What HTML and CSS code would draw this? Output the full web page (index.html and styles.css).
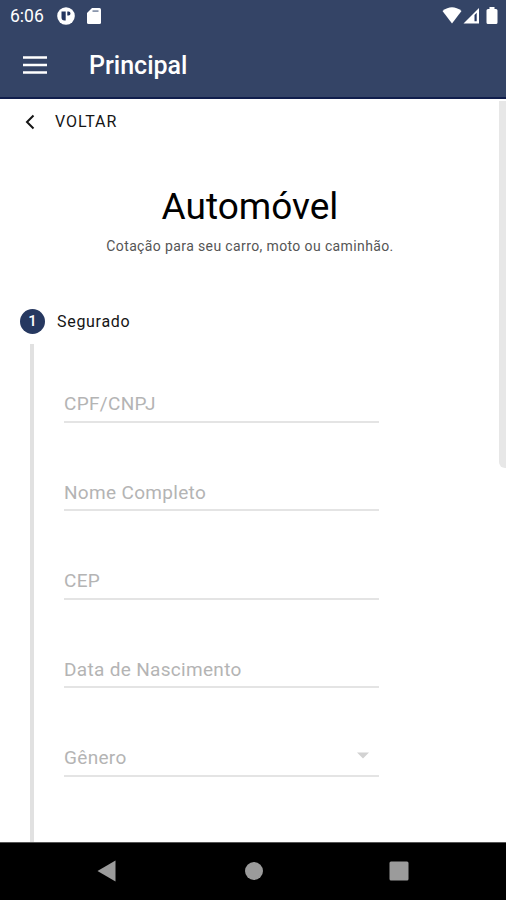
FILE: index.html
```html
<!DOCTYPE html>
<html lang="pt-BR">
<head>
<meta charset="utf-8">
<title>Automóvel</title>
<link rel="stylesheet" href="styles.css">
</head>
<body>
<div class="screen">
  <header class="header">
    <div class="status">
      <span class="time">6:06</span>
      <svg class="app-icon" width="18" height="18" viewBox="0 0 18 18"><circle cx="9" cy="9" r="8.800" fill="#fff"/><path d="M4.500 4.500h4.200v9H7.500a3 3 0 0 1-3-3zM10.300 4.500h1.200a2 2 0 0 1 0 4h-1.200z" fill="#243660"/></svg>
      <svg class="sd-icon" width="14" height="16" viewBox="0 0 14 16"><path d="M5 0h7.500Q14 0 14 1.500v13q0 1.500-1.500 1.500h-11Q0 16 0 14.500V5z" fill="#fff"/><path d="M5.500 2.200h6v1.800h-6z" fill="#8b97ad"/></svg>
      <span class="spacer"></span>
      <svg class="wifi" width="20" height="17" viewBox="0 0 20 17"><path d="M0.500 4Q10-3.500 19.500 4L10 16.500z" fill="#fff"/></svg>
      <svg class="signal" width="17" height="17" viewBox="0 0 17 17"><path d="M0.500 16.500 16 1v15.500z" fill="#fff"/><path d="M11.500 8l2.200-2.200v8.500h-2.200z" fill="#243660"/></svg>
      <svg class="battery" width="12" height="17" viewBox="0 0 12 17"><path d="M3.500 0h5v2H10q1.500 0 1.500 1.500v12Q11.500 17 10 17H2Q.5 17 .5 15.500v-12Q.5 2 2 2h1.500z" fill="#fff"/></svg>
    </div>
    <div class="appbar">
      <svg width="24" height="18" viewBox="0 0 24 18"><path d="M0 1.500h24M0 9h24M0 16.500h24" stroke="#fff" stroke-width="2.600"/></svg>
      <h1 class="app-title">Principal</h1>
    </div>
  </header>
  <main class="content">
    <div class="page">
      <a class="back">
        <svg width="10" height="16" viewBox="0 0 10 16"><path d="M8.500 1.500 2 8l6.500 6.500" fill="none" stroke="#151515" stroke-width="2"/></svg>
        <span class="back-text">VOLTAR</span>
      </a>
      <h2 class="title">Automóvel</h2>
      <p class="subtitle">Cotação para seu carro, moto ou caminhão.</p>
      <div class="step"><span class="badge">1</span><span class="step-name">Segurado</span></div>
      <div class="form">
        <div class="field"><span>CPF/CNPJ</span></div>
        <div class="field"><span>Nome Completo</span></div>
        <div class="field"><span>CEP</span></div>
        <div class="field"><span>Data de Nascimento</span></div>
        <div class="field"><span>Gênero</span><svg class="caret" width="12" height="7" viewBox="0 0 12 7"><path d="M0 .5h12L6 6.500z" fill="#d2d2d2"/></svg></div>
      </div>
    </div>
    <div class="scroll"></div>
  </main>
  <nav class="nav">
    <svg width="19" height="22" viewBox="0 0 19 22"><path d="M18.500 .5v21L.5 11z" fill="#9b9b9b"/></svg>
    <svg width="20" height="20" viewBox="0 0 20 20"><circle cx="11" cy="10" r="9" fill="#9b9b9b"/></svg>
    <svg width="20" height="20" viewBox="0 0 20 20"><rect x=".5" y=".5" width="19" height="19" rx="1.500" fill="#9b9b9b"/></svg>
  </nav>
</div>
</body>
</html>
```
FILE: styles.css
```css
* { box-sizing: border-box; }
body { margin: 0; font-family: Roboto, sans-serif; color: #151515; background: #fff; }
h1, h2, p { margin: 0; }
svg { display: block; flex: none; }
.screen { width: 506px; height: 900px; display: flex; flex-direction: column; overflow: hidden; }
.header { height: 99px; flex: none; background: #344466; border-bottom: 2px solid #101e4c; color: #fff; }
.status { height: 31px; display: flex; align-items: center; padding: 0 8px 0 10px; }
.time { font-size: 17.500px; line-height: 31px; width: 47px; padding-top: 1px; }
.sd-icon { margin-left: 12px; }
.spacer { flex: 1; }
.wifi { margin-right: 1px; }
.signal { margin-right: 6px; }
.appbar { height: 67px; display: flex; align-items: center; padding-left: 23px; gap: 42px; }
.app-title { font-size: 25px; font-weight: 500; line-height: 32px; padding-top: 2px; }
.content { flex: 1; min-height: 0; display: flex; overflow: hidden; }
.page { flex: 1; display: flex; flex-direction: column; min-width: 0; }
.back { height: 45px; display: flex; align-items: center; gap: 20px; padding-left: 25px; }
.back-text { font-size: 16px; letter-spacing: .9px; }
.title { margin-top: 38px; padding-right: 6px; font-size: 37px; font-weight: 400; line-height: 50px; text-align: center; color: #000; }
.subtitle { margin-top: 4px; padding-right: 6px; font-size: 14px; line-height: 20px; text-align: center; color: #555; letter-spacing: .38px; }
.step { margin-top: 53px; height: 25px; display: flex; align-items: center; gap: 12px; padding-left: 20px; font-size: 16px; }
.step-name { letter-spacing: .7px; }
.badge { width: 25px; height: 25px; border-radius: 50%; background: #263860; color: #fff; font-size: 15px; font-weight: 500; line-height: 25px; text-align: center; }
.form { flex: 1; margin: 10px 0 0 30px; padding: 46px 0 0 30px; border-left: 4px solid #e1e1e1; }
.field { width: 315px; height: 32.500px; margin-bottom: 56.100px; display: flex; justify-content: space-between; border-bottom: 2px solid #e4e4e4; color: #b4b4b4; font-size: 19px; letter-spacing: .32px; line-height: 28px; }
.caret { margin: 8px 10px 0 0; }
.scroll { width: 7px; height: 367px; margin-top: 2px; margin-left: -7px; background: #e7e7e7; border-radius: 0 0 0 6px; }
.nav { height: 58px; flex: none; background: #000; border-top: 1px solid #555; display: flex; align-items: center; justify-content: space-between; padding: 0 97px 1px 97px; }
```
